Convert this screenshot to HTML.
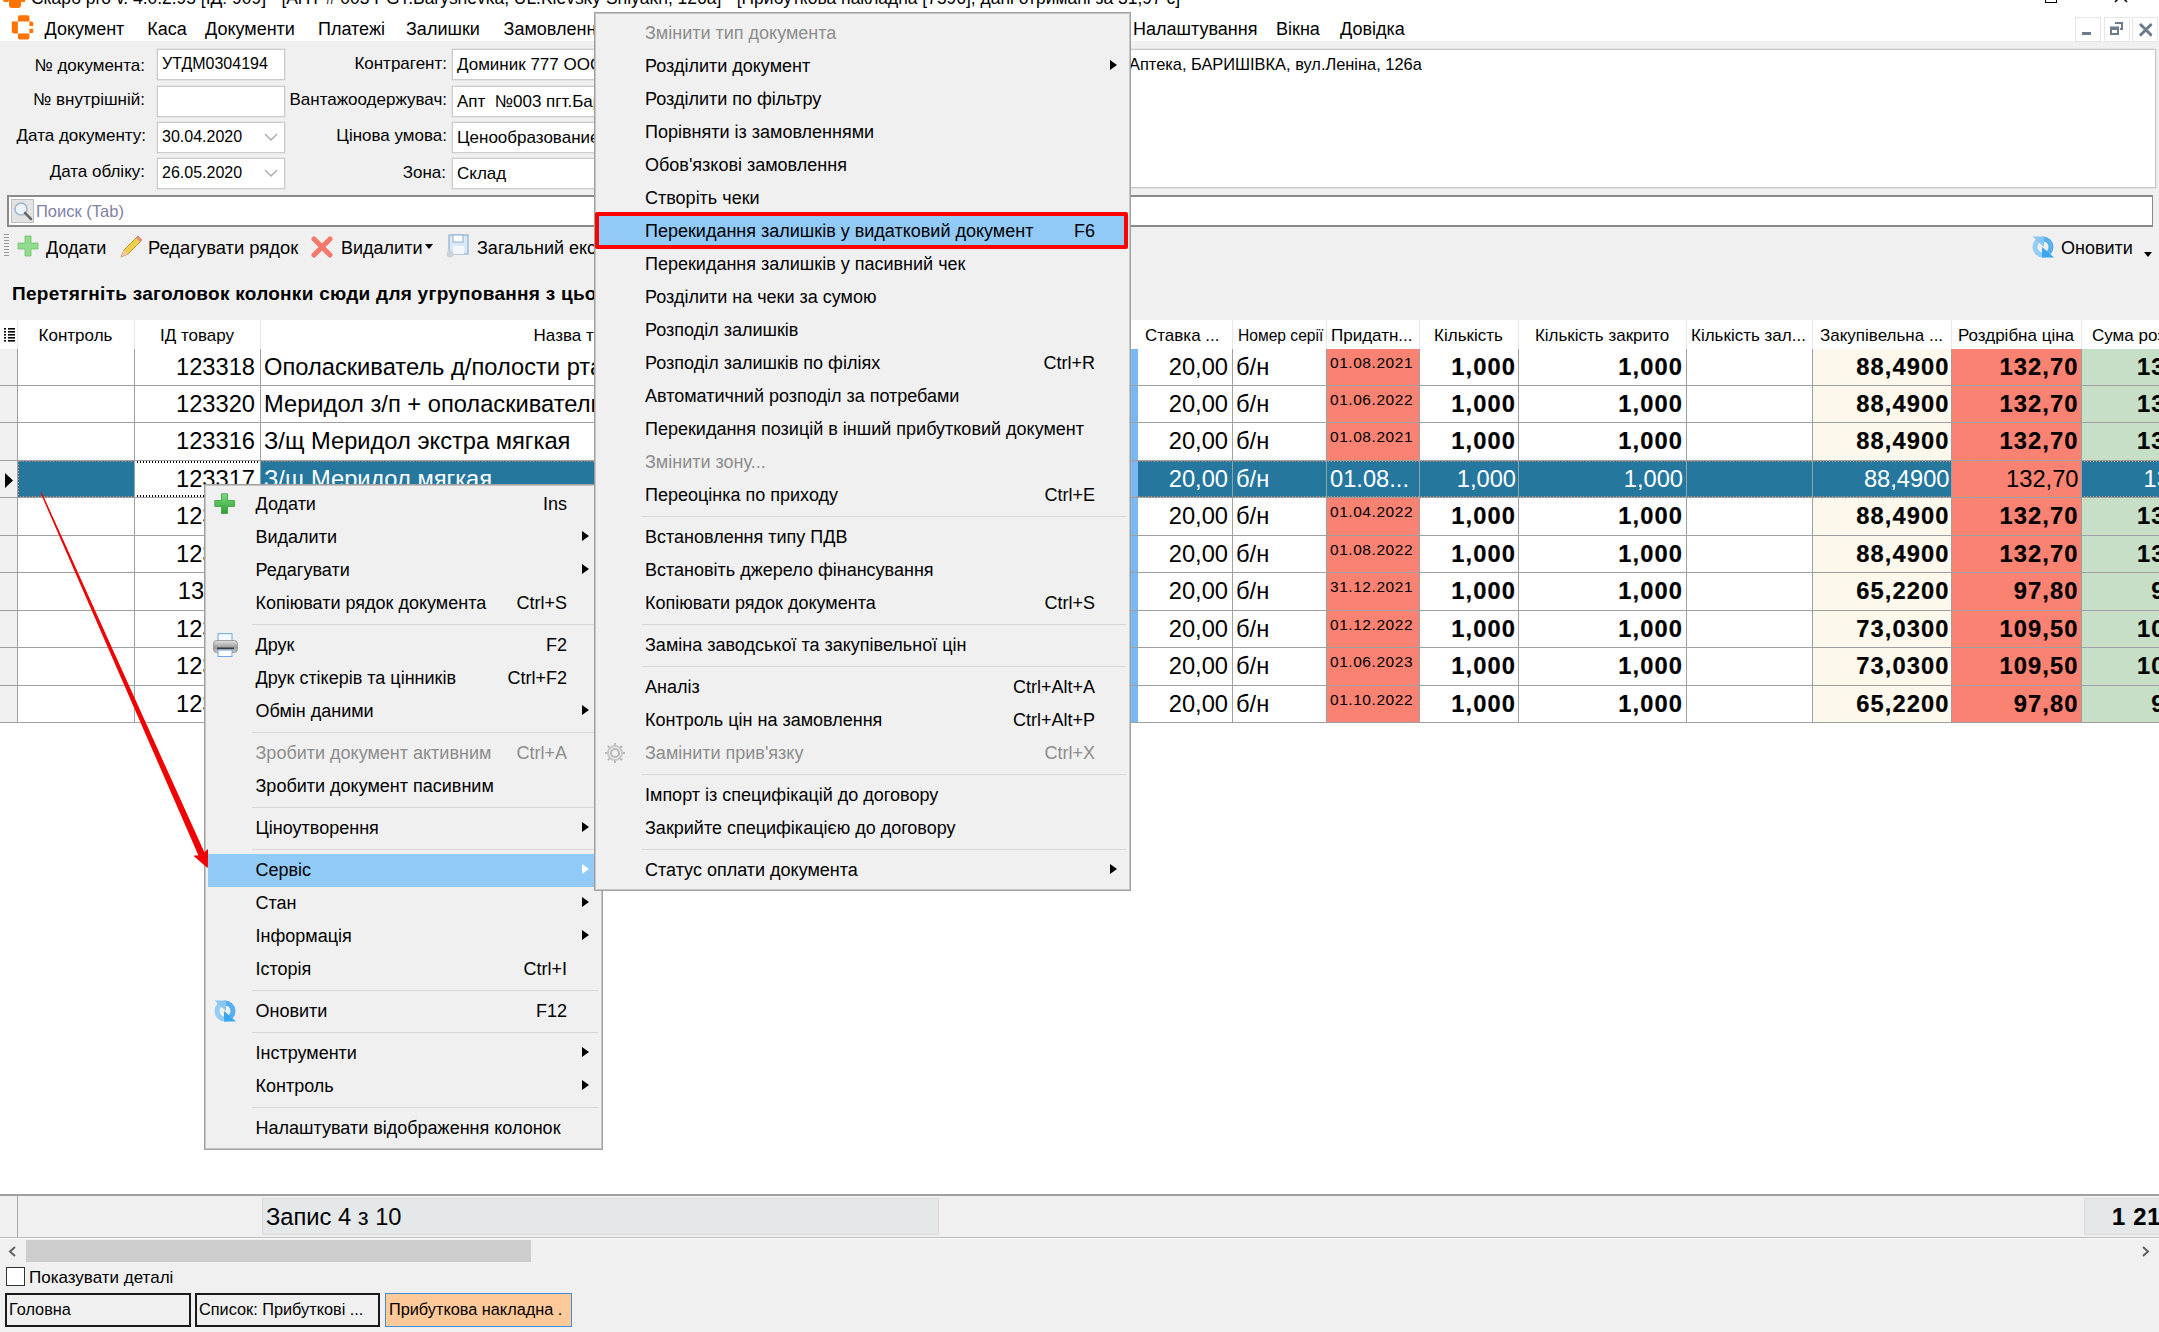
<!DOCTYPE html><html><head><meta charset='utf-8'><style>
*{box-sizing:border-box}
html,body{margin:0;padding:0}
body{width:2159px;height:1332px;overflow:hidden;position:relative;background:#f0f0f0;font-family:"Liberation Sans", sans-serif;color:#000}
.a{position:absolute;white-space:nowrap}
.t{position:absolute;white-space:nowrap;line-height:1}
.fld{position:absolute;background:#fff;border:1px solid #cbcbcb;box-shadow:0 0 0 0.6px #dedede}
.lbl{position:absolute;white-space:nowrap;font-size:17px;text-align:right;line-height:20px}
.hl{position:absolute;background:#a0a0a0}
.mi{position:absolute;white-space:nowrap;font-size:18px;line-height:33px;height:33px}
.sc{position:absolute;white-space:nowrap;font-size:18px;line-height:33px;height:33px;text-align:right}
.dis{color:#8d8d8d}
.arr{position:absolute;width:0;height:0;border-top:5.5px solid transparent;border-bottom:5.5px solid transparent;border-left:7px solid #000}
.sep{position:absolute;height:1px;background:#d7d7d7}
.g{position:absolute;white-space:nowrap;font-size:23.7px;line-height:37px;height:37px;overflow:hidden}
.gb{font-weight:700;letter-spacing:1.1px;-webkit-text-stroke:0.2px #000}
.hd{position:absolute;white-space:nowrap;font-size:17px;line-height:28px;height:28px;overflow:hidden;text-align:center}
</style></head><body>
<div class='a' style='left:0;top:0;width:2159px;height:41px;background:#fff'></div>
<div class='a' style='left:9px;top:0;width:12px;height:8px;background:#ff7300;border-radius:0 0 3px 3px'></div>
<div class='a' style='left:3px;top:0;width:6px;height:2px;background:#ff7300;border-radius:0 0 2px 2px'></div>
<div class='a' style='left:21px;top:0;width:4px;height:2px;background:#ff7300'></div>
<div class='t' style='left:31px;top:-11.7px;font-size:17.44px;line-height:20px'>Скарб pro v. 4.0.2.95 [ІД: 909] - [АПТ # 003 PGT.Baryshevka, UL.Kievsky Shlyakh, 126a] - [Прибуткова накладна [7596], дані отримані за 31,97 с]</div>
<div class='a' style='left:2045px;top:-9px;width:12px;height:12px;border:1.5px solid #000'></div>
<svg class='a' style='left:2110px;top:-10px' width='24' height='14'><path d='M5 0 L17 12 M17 0 L5 12' stroke='#000' stroke-width='1.5'/></svg>
<svg class='a' style='left:11px;top:15px' width='24' height='26'><path d='M6.9 6.6 V2 Q6.9 0.2 8.7 0.2 H16.6 Q18.4 0.2 18.4 2 V6.6 Z' fill='#ff7300'/><path d='M6.9 6.6 H0.8 V16.6 Q0.8 18.4 2.6 18.4 H6.9 Z' fill='#ff7300'/><path d='M6.9 18.4 H18.4 V22.6 Q18.4 24.5 16.6 24.5 H8.7 Q6.9 24.5 6.9 22.6 Z' fill='#ff7300'/><path d='M18.4 6.6 H21 Q22.2 6.6 22.2 8.2 V11 H18.4 Z' fill='#ff7300'/><path d='M18.4 13.7 H22.2 V16.5 Q22.2 18.1 21 18.1 H18.4 Z' fill='#ff7300'/></svg>
<div class='t' style='left:44.5px;top:19px;font-size:18px;line-height:20px'>Документ</div>
<div class='t' style='left:147.3px;top:19px;font-size:18px;line-height:20px'>Каса</div>
<div class='t' style='left:205px;top:19px;font-size:18px;line-height:20px'>Документи</div>
<div class='t' style='left:318px;top:19px;font-size:18px;line-height:20px'>Платежі</div>
<div class='t' style='left:406px;top:19px;font-size:18px;line-height:20px'>Залишки</div>
<div class='t' style='left:503.6px;top:19px;font-size:18px;line-height:20px'>Замовлення</div>
<div class='t' style='left:1133px;top:19px;font-size:18px;line-height:20px'>Налаштування</div>
<div class='t' style='left:1276px;top:19px;font-size:18px;line-height:20px'>Вікна</div>
<div class='t' style='left:1340px;top:19px;font-size:18px;line-height:20px'>Довідка</div>
<div class='a' style='left:2075px;top:17px;width:26px;height:25px;border:1px solid #e6e6e6;background:#fff'></div>
<div class='a' style='left:2104px;top:17px;width:26px;height:25px;border:1px solid #e6e6e6;background:#fff'></div>
<div class='a' style='left:2132px;top:17px;width:26px;height:25px;border:1px solid #e6e6e6;background:#fff'></div>
<div class='a' style='left:2082px;top:32px;width:9px;height:3px;background:#6e7b8b'></div>
<svg class='a' style='left:2108px;top:20px' width='18' height='18'><path d='M7 3 H14 V9 H12 M3 7.5 H10 V14 H3 Z' fill='none' stroke='#6e7b8b' stroke-width='2'/><path d='M3 9 H10' stroke='#6e7b8b' stroke-width='2'/></svg>
<svg class='a' style='left:2138px;top:22px' width='16' height='16'><path d='M2.8 2.8 L12.8 12.8 M12.8 2.8 L2.8 12.8' stroke='#6e7b8b' stroke-width='3' stroke-linecap='round'/></svg>
<div class='lbl' style='left:-55px;width:200px;top:55.5px'>№ документа:</div>
<div class='lbl' style='left:-55px;width:200px;top:90px'>№ внутрішній:</div>
<div class='lbl' style='left:-54px;width:200px;top:126px'>Дата документу:</div>
<div class='lbl' style='left:-55px;width:200px;top:162px'>Дата обліку:</div>
<div class='fld' style='left:157px;top:49px;width:128px;height:31px'></div>
<div class='t' style='left:162px;top:54px;font-size:16px;line-height:20px'>УТДМ0304194</div>
<div class='fld' style='left:157px;top:86px;width:128px;height:31px'></div>
<div class='fld' style='left:157px;top:122px;width:128px;height:31px'></div>
<div class='t' style='left:162px;top:127px;font-size:16px;line-height:20px'>30.04.2020</div>
<svg class='a' style='left:264px;top:133px' width='14' height='9'><path d='M1 1 L7 7 L13 1' fill='none' stroke='#a8a8a8' stroke-width='1.3'/></svg>
<div class='fld' style='left:157px;top:158px;width:128px;height:31px'></div>
<div class='t' style='left:162px;top:163px;font-size:16px;line-height:20px'>26.05.2020</div>
<svg class='a' style='left:264px;top:169px' width='14' height='9'><path d='M1 1 L7 7 L13 1' fill='none' stroke='#a8a8a8' stroke-width='1.3'/></svg>
<div class='lbl' style='left:247px;width:200px;top:54px'>Контрагент:</div>
<div class='lbl' style='left:247px;width:200px;top:90px'>Вантажоодержувач:</div>
<div class='lbl' style='left:247px;width:200px;top:126px'>Цінова умова:</div>
<div class='lbl' style='left:246px;width:200px;top:163px'>Зона:</div>
<div class='fld' style='left:452px;top:49px;width:200px;height:31px;overflow:hidden'><div class='t' style='left:4px;top:5px;font-size:17px;line-height:20px'>Доминик 777 ООО</div></div>
<div class='fld' style='left:452px;top:86px;width:200px;height:31px;overflow:hidden'><div class='t' style='left:4px;top:5px;font-size:17px;line-height:20px'>Апт&nbsp; №003 пгт.Барышевка</div></div>
<div class='fld' style='left:452px;top:122px;width:200px;height:31px;overflow:hidden'><div class='t' style='left:4px;top:5px;font-size:17px;line-height:20px'>Ценообразование</div></div>
<div class='fld' style='left:452px;top:158px;width:200px;height:31px;overflow:hidden'><div class='t' style='left:4px;top:5px;font-size:17px;line-height:20px'>Склад</div></div>
<div class='fld' style='left:600px;top:49px;width:1556px;height:139px;border-color:#c8c8c8'></div>
<div class='t' style='left:1129px;top:54px;font-size:16.4px;line-height:20px'>Аптека, БАРИШІВКА, вул.Леніна, 126а</div>
<div class='a' style='left:7px;top:195px;width:2146px;height:32px;background:#fff;border:2px solid #8a8a8a;border-right-width:1px;border-bottom-width:2px'></div>
<div class='a' style='left:11px;top:199px;width:23px;height:24px;background:#e3e3e3;border:1px solid #bdbdbd'></div>
<svg class='a' style='left:12px;top:200px' width='22' height='22'><circle cx='9' cy='9' r='6' fill='#eaf3fb' stroke='#9fb6cc' stroke-width='1.6'/><path d='M13 13 L19 19' stroke='#6b6b6b' stroke-width='2.6' stroke-linecap='round'/></svg>
<div class='t' style='left:36px;top:201px;font-size:16.5px;line-height:20px;color:#7f82a6'>Поиск (Tab)</div>
<div class='a' style='left:4px;top:234px;width:5px;height:24px;background:repeating-linear-gradient(#9a9a9a 0 1px,transparent 1px 3px)'></div>
<svg class='a' style='left:17px;top:235px' width='23' height='23'><path d='M8 1 H14 V8 H21 V14 H14 V21 H8 V14 H1 V8 H8 Z' fill='#8fdc8f' stroke='#6cc06c' stroke-width='0.8' stroke-linejoin='round'/></svg>
<div class='t' style='left:46px;top:238px;font-size:18px;line-height:20px'>Додати</div>
<svg class='a' style='left:117px;top:233px' width='28' height='28'><path d='M4 24 L7 17 L21 3 L25 7 L11 21 Z' fill='#f2cf4a' stroke='#b89a2a' stroke-width='1'/><path d='M21 3 L25 7 L23 9 L19 5 Z' fill='#e88'/><path d='M4 24 L7 17 L11 21 Z' fill='#f4c9a8'/></svg>
<div class='t' style='left:148px;top:238px;font-size:18.4px;line-height:20px'>Редагувати рядок</div>
<svg class='a' style='left:310px;top:235px' width='24' height='24'><path d='M4 4 L20 20 M20 4 L4 20' stroke='#f4796b' stroke-width='5' stroke-linecap='round'/></svg>
<div class='t' style='left:341px;top:238px;font-size:18px;line-height:20px'>Видалити</div>
<div class='a' style='left:425px;top:244px;width:0;height:0;border-left:4px solid transparent;border-right:4px solid transparent;border-top:5px solid #000'></div>
<svg class='a' style='left:446px;top:234px' width='25' height='25'><rect x='3' y='1' width='19' height='19' fill='#dbe9f6' stroke='#8fb0d0' stroke-width='1.2'/><rect x='7' y='1' width='10' height='7' fill='#fff' stroke='#8fb0d0'/><rect x='7' y='12' width='11' height='8' fill='#f4f8fc'/><circle cx='4' cy='20' r='3.5' fill='#c9d3dc'/></svg>
<div class='t' style='left:477px;top:238px;font-size:18px;line-height:20px'>Загальний експорт</div>
<svg class='a' style='left:2032px;top:236px' width='23' height='23'><path d='M11 3 A8 8 0 0 0 11 19' fill='none' stroke='#93cdf3' stroke-width='5'/><path d='M11 19 A8 8 0 0 0 11 3' fill='none' stroke='#56b0ee' stroke-width='5'/><path d='M0.5 0.5 H12 V11 Z' fill='#86c6f2'/><path d='M22 21.5 H10 V11 Z' fill='#3aa6ee'/></svg>
<div class='t' style='left:2061px;top:238px;font-size:18px;line-height:20px'>Оновити</div>
<div class='a' style='left:2144px;top:252px;width:0;height:0;border-left:4px solid transparent;border-right:4px solid transparent;border-top:5px solid #000'></div>
<div class='t' style='left:12px;top:284px;font-size:19px;line-height:20px;font-weight:700;letter-spacing:0.27px'>Перетягніть заголовок колонки сюди для угруповання з цього стовпця</div>
<div class='a' style='left:0;top:320px;width:2159px;height:874px;background:#fff'></div>
<div class='a' style='left:17px;top:320px;width:1px;height:29px;background:#e8e8e8'></div>
<div class='a' style='left:134px;top:320px;width:1px;height:29px;background:#e8e8e8'></div>
<div class='a' style='left:260px;top:320px;width:1px;height:29px;background:#e8e8e8'></div>
<div class='a' style='left:1232px;top:320px;width:1px;height:29px;background:#e8e8e8'></div>
<div class='a' style='left:1326px;top:320px;width:1px;height:29px;background:#e8e8e8'></div>
<div class='a' style='left:1419px;top:320px;width:1px;height:29px;background:#e8e8e8'></div>
<div class='a' style='left:1518px;top:320px;width:1px;height:29px;background:#e8e8e8'></div>
<div class='a' style='left:1686px;top:320px;width:1px;height:29px;background:#e8e8e8'></div>
<div class='a' style='left:1812px;top:320px;width:1px;height:29px;background:#e8e8e8'></div>
<div class='a' style='left:1951px;top:320px;width:1px;height:29px;background:#e8e8e8'></div>
<div class='a' style='left:2081px;top:320px;width:1px;height:29px;background:#e8e8e8'></div>
<svg class='a' style='left:3.5px;top:327.5px' width='12' height='16'><rect x='0' y='0' width='2' height='1.6' fill='#000'/><rect x='4' y='0' width='7' height='1.6' fill='#000'/><rect x='0' y='3' width='2' height='1.6' fill='#000'/><rect x='4' y='3' width='7' height='1.6' fill='#000'/><rect x='0' y='6' width='2' height='1.6' fill='#000'/><rect x='4' y='6' width='7' height='1.6' fill='#000'/><rect x='0' y='9' width='2' height='1.6' fill='#000'/><rect x='4' y='9' width='7' height='1.6' fill='#000'/><rect x='0' y='12' width='2' height='1.6' fill='#000'/><rect x='4' y='12' width='7' height='1.6' fill='#000'/></svg>
<div class='hd' style='left:17px;width:117px;top:322px'>Контроль</div>
<div class='hd' style='left:134px;width:126px;top:322px'>ІД товару</div>
<div class='hd' style='left:533.6px;width:266.4px;top:322px;text-align:left;'>Назва товару</div>
<div class='hd' style='left:1145px;width:87px;top:322px;text-align:left;'>Ставка ...</div>
<div class='hd' style='left:1238px;width:88px;top:322px;text-align:left;font-size:15.6px'>Номер серії</div>
<div class='hd' style='left:1331px;width:88px;top:322px;text-align:left;'>Придатн...</div>
<div class='hd' style='left:1419px;width:99px;top:322px'>Кількість</div>
<div class='hd' style='left:1518px;width:168px;top:322px'>Кількість закрито</div>
<div class='hd' style='left:1691px;width:121px;top:322px;text-align:left;'>Кількість зал...</div>
<div class='hd' style='left:1820px;width:131px;top:322px;text-align:left;'>Закупівельна ...</div>
<div class='hd' style='left:1951px;width:130px;top:322px'>Роздрібна ціна</div>
<div class='hd' style='left:2092px;width:208px;top:322px;text-align:left;'>Сума роздрібна</div>
<div class='a' style='left:0;top:349px;width:17px;height:37px;background:#f0f0f0'></div>
<div class='a' style='left:1326px;top:349px;width:93px;height:37px;background:#f98272'></div>
<div class='a' style='left:1812px;top:349px;width:139px;height:37px;background:#fdf8ec'></div>
<div class='a' style='left:1951px;top:349px;width:130px;height:37px;background:#f98272'></div>
<div class='a' style='left:2081px;top:349px;width:78px;height:37px;background:#c6dfc6'></div>
<div class='a' style='left:1131px;top:349px;width:7px;height:37px;background:#7ab8f5'></div>
<div class='g' style='left:134px;width:121px;top:349px;text-align:right'>123318</div>
<div class='g' style='left:264px;width:870px;top:349px;color:#000'>Ополаскиватель д/полости рта Меридол 400мл</div>
<div class='g' style='left:1138px;width:90px;top:349px;text-align:right;color:#000'>20,00</div>
<div class='g' style='left:1236px;width:90px;top:349px;color:#000'>б/н</div>
<div class='t' style='left:1330px;top:355px;font-size:15.5px;line-height:16px;letter-spacing:0.55px'>01.08.2021</div>
<div class='g gb' style='left:1419px;width:97px;top:349px;text-align:right;color:#000'>1,000</div>
<div class='g gb' style='left:1518px;width:165px;top:349px;text-align:right;color:#000'>1,000</div>
<div class='g gb' style='left:1812px;width:137.5px;top:349px;text-align:right;color:#000'>88,4900</div>
<div class='g gb' style='left:1951px;width:127.5px;top:349px;text-align:right;color:#000'>132,70</div>
<div class='g gb' style='left:2081px;width:135px;top:349px;text-align:right;color:#000;overflow:visible'>132,70</div>
<div class='hl' style='left:0;top:385px;width:2159px;height:1px'></div>
<div class='a' style='left:0;top:386px;width:17px;height:37px;background:#f0f0f0'></div>
<div class='a' style='left:1326px;top:386px;width:93px;height:37px;background:#f98272'></div>
<div class='a' style='left:1812px;top:386px;width:139px;height:37px;background:#fdf8ec'></div>
<div class='a' style='left:1951px;top:386px;width:130px;height:37px;background:#f98272'></div>
<div class='a' style='left:2081px;top:386px;width:78px;height:37px;background:#c6dfc6'></div>
<div class='a' style='left:1131px;top:386px;width:7px;height:37px;background:#7ab8f5'></div>
<div class='g' style='left:134px;width:121px;top:386px;text-align:right'>123320</div>
<div class='g' style='left:264px;width:870px;top:386px;color:#000'>Меридол з/п + ополаскиватель 400мл</div>
<div class='g' style='left:1138px;width:90px;top:386px;text-align:right;color:#000'>20,00</div>
<div class='g' style='left:1236px;width:90px;top:386px;color:#000'>б/н</div>
<div class='t' style='left:1330px;top:392px;font-size:15.5px;line-height:16px;letter-spacing:0.55px'>01.06.2022</div>
<div class='g gb' style='left:1419px;width:97px;top:386px;text-align:right;color:#000'>1,000</div>
<div class='g gb' style='left:1518px;width:165px;top:386px;text-align:right;color:#000'>1,000</div>
<div class='g gb' style='left:1812px;width:137.5px;top:386px;text-align:right;color:#000'>88,4900</div>
<div class='g gb' style='left:1951px;width:127.5px;top:386px;text-align:right;color:#000'>132,70</div>
<div class='g gb' style='left:2081px;width:135px;top:386px;text-align:right;color:#000;overflow:visible'>132,70</div>
<div class='hl' style='left:0;top:422px;width:2159px;height:1px'></div>
<div class='a' style='left:0;top:423px;width:17px;height:38px;background:#f0f0f0'></div>
<div class='a' style='left:1326px;top:423px;width:93px;height:38px;background:#f98272'></div>
<div class='a' style='left:1812px;top:423px;width:139px;height:38px;background:#fdf8ec'></div>
<div class='a' style='left:1951px;top:423px;width:130px;height:38px;background:#f98272'></div>
<div class='a' style='left:2081px;top:423px;width:78px;height:38px;background:#c6dfc6'></div>
<div class='a' style='left:1131px;top:423px;width:7px;height:38px;background:#7ab8f5'></div>
<div class='g' style='left:134px;width:121px;top:423px;text-align:right'>123316</div>
<div class='g' style='left:264px;width:870px;top:423px;color:#000'>З/щ Меридол экстра мягкая</div>
<div class='g' style='left:1138px;width:90px;top:423px;text-align:right;color:#000'>20,00</div>
<div class='g' style='left:1236px;width:90px;top:423px;color:#000'>б/н</div>
<div class='t' style='left:1330px;top:429px;font-size:15.5px;line-height:16px;letter-spacing:0.55px'>01.08.2021</div>
<div class='g gb' style='left:1419px;width:97px;top:423px;text-align:right;color:#000'>1,000</div>
<div class='g gb' style='left:1518px;width:165px;top:423px;text-align:right;color:#000'>1,000</div>
<div class='g gb' style='left:1812px;width:137.5px;top:423px;text-align:right;color:#000'>88,4900</div>
<div class='g gb' style='left:1951px;width:127.5px;top:423px;text-align:right;color:#000'>132,70</div>
<div class='g gb' style='left:2081px;width:135px;top:423px;text-align:right;color:#000;overflow:visible'>132,70</div>
<div class='hl' style='left:0;top:460px;width:2159px;height:1px'></div>
<div class='a' style='left:0;top:461px;width:17px;height:37px;background:#f0f0f0'></div>
<div class='a' style='left:17px;top:461px;width:2142px;height:37px;background:#26779e'></div>
<div class='a' style='left:134px;top:461px;width:126px;height:37px;background:#fff'></div>
<div class='a' style='left:1951px;top:461px;width:130px;height:37px;background:#f98272'></div>
<div class='a' style='left:1131px;top:461px;width:7px;height:37px;background:#7ab8f5'></div>
<div class='g' style='left:134px;width:121px;top:461px;text-align:right'>123317</div>
<div class='g' style='left:264px;width:870px;top:461px;color:#fff'>З/щ Меридол мягкая</div>
<div class='g' style='left:1138px;width:90px;top:461px;text-align:right;color:#fff'>20,00</div>
<div class='g' style='left:1236px;width:90px;top:461px;color:#fff'>б/н</div>
<div class='g' style='left:1330px;width:89px;top:461px;color:#fff'>01.08...</div>
<div class='g' style='left:1419px;width:97px;top:461px;text-align:right;color:#fff'>1,000</div>
<div class='g' style='left:1518px;width:165px;top:461px;text-align:right;color:#fff'>1,000</div>
<div class='g' style='left:1812px;width:137.5px;top:461px;text-align:right;color:#fff'>88,4900</div>
<div class='g' style='left:1951px;width:127.5px;top:461px;text-align:right;color:#000'>132,70</div>
<div class='g' style='left:2081px;width:135px;top:461px;text-align:right;color:#fff;overflow:visible'>132,70</div>
<div class='hl' style='left:0;top:497px;width:2159px;height:1px'></div>
<div class='a' style='left:17px;top:461px;width:2142px;height:1px;background:repeating-linear-gradient(90deg,#dc9068 0 1px,transparent 1px 3px)'></div>
<div class='a' style='left:17px;top:496px;width:2142px;height:1px;background:repeating-linear-gradient(90deg,#dc9068 0 1px,transparent 1px 3px)'></div>
<div class='a' style='left:134px;top:461px;width:126px;height:2px;background:repeating-linear-gradient(90deg,#000 0 1.5px,#fff 1.5px 3px)'></div>
<div class='a' style='left:134px;top:495px;width:126px;height:2px;background:repeating-linear-gradient(90deg,#000 0 1.5px,#fff 1.5px 3px)'></div>
<div class='a' style='left:17px;top:461px;width:1.5px;height:36px;background:repeating-linear-gradient(#dc9068 0 1px,transparent 1px 3px)'></div>
<svg class='a' style='left:4px;top:473px' width='10' height='16'><path d='M1 0 L9 7.5 L1 15 Z' fill='#000'/></svg>
<div class='a' style='left:0;top:498px;width:17px;height:38px;background:#f0f0f0'></div>
<div class='a' style='left:1326px;top:498px;width:93px;height:38px;background:#f98272'></div>
<div class='a' style='left:1812px;top:498px;width:139px;height:38px;background:#fdf8ec'></div>
<div class='a' style='left:1951px;top:498px;width:130px;height:38px;background:#f98272'></div>
<div class='a' style='left:2081px;top:498px;width:78px;height:38px;background:#c6dfc6'></div>
<div class='a' style='left:1131px;top:498px;width:7px;height:38px;background:#7ab8f5'></div>
<div class='g' style='left:134px;width:121px;top:498px;text-align:right'>123319</div>
<div class='g' style='left:264px;width:870px;top:498px;color:#000'>З/п Меридол 75мл</div>
<div class='g' style='left:1138px;width:90px;top:498px;text-align:right;color:#000'>20,00</div>
<div class='g' style='left:1236px;width:90px;top:498px;color:#000'>б/н</div>
<div class='t' style='left:1330px;top:504px;font-size:15.5px;line-height:16px;letter-spacing:0.55px'>01.04.2022</div>
<div class='g gb' style='left:1419px;width:97px;top:498px;text-align:right;color:#000'>1,000</div>
<div class='g gb' style='left:1518px;width:165px;top:498px;text-align:right;color:#000'>1,000</div>
<div class='g gb' style='left:1812px;width:137.5px;top:498px;text-align:right;color:#000'>88,4900</div>
<div class='g gb' style='left:1951px;width:127.5px;top:498px;text-align:right;color:#000'>132,70</div>
<div class='g gb' style='left:2081px;width:135px;top:498px;text-align:right;color:#000;overflow:visible'>132,70</div>
<div class='hl' style='left:0;top:535px;width:2159px;height:1px'></div>
<div class='a' style='left:0;top:536px;width:17px;height:37px;background:#f0f0f0'></div>
<div class='a' style='left:1326px;top:536px;width:93px;height:37px;background:#f98272'></div>
<div class='a' style='left:1812px;top:536px;width:139px;height:37px;background:#fdf8ec'></div>
<div class='a' style='left:1951px;top:536px;width:130px;height:37px;background:#f98272'></div>
<div class='a' style='left:2081px;top:536px;width:78px;height:37px;background:#c6dfc6'></div>
<div class='a' style='left:1131px;top:536px;width:7px;height:37px;background:#7ab8f5'></div>
<div class='g' style='left:134px;width:121px;top:536px;text-align:right'>123321</div>
<div class='g' style='left:264px;width:870px;top:536px;color:#000'>З/п Меридол бережное отбел.</div>
<div class='g' style='left:1138px;width:90px;top:536px;text-align:right;color:#000'>20,00</div>
<div class='g' style='left:1236px;width:90px;top:536px;color:#000'>б/н</div>
<div class='t' style='left:1330px;top:542px;font-size:15.5px;line-height:16px;letter-spacing:0.55px'>01.08.2022</div>
<div class='g gb' style='left:1419px;width:97px;top:536px;text-align:right;color:#000'>1,000</div>
<div class='g gb' style='left:1518px;width:165px;top:536px;text-align:right;color:#000'>1,000</div>
<div class='g gb' style='left:1812px;width:137.5px;top:536px;text-align:right;color:#000'>88,4900</div>
<div class='g gb' style='left:1951px;width:127.5px;top:536px;text-align:right;color:#000'>132,70</div>
<div class='g gb' style='left:2081px;width:135px;top:536px;text-align:right;color:#000;overflow:visible'>132,70</div>
<div class='hl' style='left:0;top:572px;width:2159px;height:1px'></div>
<div class='a' style='left:0;top:573px;width:17px;height:38px;background:#f0f0f0'></div>
<div class='a' style='left:1326px;top:573px;width:93px;height:38px;background:#f98272'></div>
<div class='a' style='left:1812px;top:573px;width:139px;height:38px;background:#fdf8ec'></div>
<div class='a' style='left:1951px;top:573px;width:130px;height:38px;background:#f98272'></div>
<div class='a' style='left:2081px;top:573px;width:78px;height:38px;background:#c6dfc6'></div>
<div class='a' style='left:1131px;top:573px;width:7px;height:38px;background:#7ab8f5'></div>
<div class='g' style='left:134px;width:121px;top:573px;text-align:right'>131122</div>
<div class='g' style='left:264px;width:870px;top:573px;color:#000'>З/щ Элмекс</div>
<div class='g' style='left:1138px;width:90px;top:573px;text-align:right;color:#000'>20,00</div>
<div class='g' style='left:1236px;width:90px;top:573px;color:#000'>б/н</div>
<div class='t' style='left:1330px;top:579px;font-size:15.5px;line-height:16px;letter-spacing:0.55px'>31.12.2021</div>
<div class='g gb' style='left:1419px;width:97px;top:573px;text-align:right;color:#000'>1,000</div>
<div class='g gb' style='left:1518px;width:165px;top:573px;text-align:right;color:#000'>1,000</div>
<div class='g gb' style='left:1812px;width:137.5px;top:573px;text-align:right;color:#000'>65,2200</div>
<div class='g gb' style='left:1951px;width:127.5px;top:573px;text-align:right;color:#000'>97,80</div>
<div class='g gb' style='left:2081px;width:135px;top:573px;text-align:right;color:#000;overflow:visible'>97,80</div>
<div class='hl' style='left:0;top:610px;width:2159px;height:1px'></div>
<div class='a' style='left:0;top:611px;width:17px;height:37px;background:#f0f0f0'></div>
<div class='a' style='left:1326px;top:611px;width:93px;height:37px;background:#f98272'></div>
<div class='a' style='left:1812px;top:611px;width:139px;height:37px;background:#fdf8ec'></div>
<div class='a' style='left:1951px;top:611px;width:130px;height:37px;background:#f98272'></div>
<div class='a' style='left:2081px;top:611px;width:78px;height:37px;background:#c6dfc6'></div>
<div class='a' style='left:1131px;top:611px;width:7px;height:37px;background:#7ab8f5'></div>
<div class='g' style='left:134px;width:121px;top:611px;text-align:right'>123325</div>
<div class='g' style='left:264px;width:870px;top:611px;color:#000'>З/п Элмекс сенситив</div>
<div class='g' style='left:1138px;width:90px;top:611px;text-align:right;color:#000'>20,00</div>
<div class='g' style='left:1236px;width:90px;top:611px;color:#000'>б/н</div>
<div class='t' style='left:1330px;top:617px;font-size:15.5px;line-height:16px;letter-spacing:0.55px'>01.12.2022</div>
<div class='g gb' style='left:1419px;width:97px;top:611px;text-align:right;color:#000'>1,000</div>
<div class='g gb' style='left:1518px;width:165px;top:611px;text-align:right;color:#000'>1,000</div>
<div class='g gb' style='left:1812px;width:137.5px;top:611px;text-align:right;color:#000'>73,0300</div>
<div class='g gb' style='left:1951px;width:127.5px;top:611px;text-align:right;color:#000'>109,50</div>
<div class='g gb' style='left:2081px;width:135px;top:611px;text-align:right;color:#000;overflow:visible'>109,50</div>
<div class='hl' style='left:0;top:647px;width:2159px;height:1px'></div>
<div class='a' style='left:0;top:648px;width:17px;height:38px;background:#f0f0f0'></div>
<div class='a' style='left:1326px;top:648px;width:93px;height:38px;background:#f98272'></div>
<div class='a' style='left:1812px;top:648px;width:139px;height:38px;background:#fdf8ec'></div>
<div class='a' style='left:1951px;top:648px;width:130px;height:38px;background:#f98272'></div>
<div class='a' style='left:2081px;top:648px;width:78px;height:38px;background:#c6dfc6'></div>
<div class='a' style='left:1131px;top:648px;width:7px;height:38px;background:#7ab8f5'></div>
<div class='g' style='left:134px;width:121px;top:648px;text-align:right'>123326</div>
<div class='g' style='left:264px;width:870px;top:648px;color:#000'>З/п Элмекс 75мл</div>
<div class='g' style='left:1138px;width:90px;top:648px;text-align:right;color:#000'>20,00</div>
<div class='g' style='left:1236px;width:90px;top:648px;color:#000'>б/н</div>
<div class='t' style='left:1330px;top:654px;font-size:15.5px;line-height:16px;letter-spacing:0.55px'>01.06.2023</div>
<div class='g gb' style='left:1419px;width:97px;top:648px;text-align:right;color:#000'>1,000</div>
<div class='g gb' style='left:1518px;width:165px;top:648px;text-align:right;color:#000'>1,000</div>
<div class='g gb' style='left:1812px;width:137.5px;top:648px;text-align:right;color:#000'>73,0300</div>
<div class='g gb' style='left:1951px;width:127.5px;top:648px;text-align:right;color:#000'>109,50</div>
<div class='g gb' style='left:2081px;width:135px;top:648px;text-align:right;color:#000;overflow:visible'>109,50</div>
<div class='hl' style='left:0;top:685px;width:2159px;height:1px'></div>
<div class='a' style='left:0;top:686px;width:17px;height:37px;background:#f0f0f0'></div>
<div class='a' style='left:1326px;top:686px;width:93px;height:37px;background:#f98272'></div>
<div class='a' style='left:1812px;top:686px;width:139px;height:37px;background:#fdf8ec'></div>
<div class='a' style='left:1951px;top:686px;width:130px;height:37px;background:#f98272'></div>
<div class='a' style='left:2081px;top:686px;width:78px;height:37px;background:#c6dfc6'></div>
<div class='a' style='left:1131px;top:686px;width:7px;height:37px;background:#7ab8f5'></div>
<div class='g' style='left:134px;width:121px;top:686px;text-align:right'>123324</div>
<div class='g' style='left:264px;width:870px;top:686px;color:#000'>З/щ Элмекс мягкая</div>
<div class='g' style='left:1138px;width:90px;top:686px;text-align:right;color:#000'>20,00</div>
<div class='g' style='left:1236px;width:90px;top:686px;color:#000'>б/н</div>
<div class='t' style='left:1330px;top:692px;font-size:15.5px;line-height:16px;letter-spacing:0.55px'>01.10.2022</div>
<div class='g gb' style='left:1419px;width:97px;top:686px;text-align:right;color:#000'>1,000</div>
<div class='g gb' style='left:1518px;width:165px;top:686px;text-align:right;color:#000'>1,000</div>
<div class='g gb' style='left:1812px;width:137.5px;top:686px;text-align:right;color:#000'>65,2200</div>
<div class='g gb' style='left:1951px;width:127.5px;top:686px;text-align:right;color:#000'>97,80</div>
<div class='g gb' style='left:2081px;width:135px;top:686px;text-align:right;color:#000;overflow:visible'>97,80</div>
<div class='hl' style='left:0;top:722px;width:2159px;height:1px'></div>
<div class='hl' style='left:17px;top:349px;width:1px;height:374px'></div>
<div class='hl' style='left:134px;top:349px;width:1px;height:374px'></div>
<div class='a' style='left:134px;top:462px;width:1px;height:34px;background:#8fa3ad'></div>
<div class='hl' style='left:260px;top:349px;width:1px;height:374px'></div>
<div class='a' style='left:260px;top:462px;width:1px;height:34px;background:#8fa3ad'></div>
<div class='hl' style='left:1232px;top:349px;width:1px;height:374px'></div>
<div class='a' style='left:1232px;top:462px;width:1px;height:34px;background:#8fa3ad'></div>
<div class='hl' style='left:1326px;top:349px;width:1px;height:374px'></div>
<div class='a' style='left:1326px;top:462px;width:1px;height:34px;background:#8fa3ad'></div>
<div class='hl' style='left:1419px;top:349px;width:1px;height:374px'></div>
<div class='a' style='left:1419px;top:462px;width:1px;height:34px;background:#8fa3ad'></div>
<div class='hl' style='left:1518px;top:349px;width:1px;height:374px'></div>
<div class='a' style='left:1518px;top:462px;width:1px;height:34px;background:#8fa3ad'></div>
<div class='hl' style='left:1686px;top:349px;width:1px;height:374px'></div>
<div class='a' style='left:1686px;top:462px;width:1px;height:34px;background:#8fa3ad'></div>
<div class='hl' style='left:1812px;top:349px;width:1px;height:374px'></div>
<div class='a' style='left:1812px;top:462px;width:1px;height:34px;background:#8fa3ad'></div>
<div class='hl' style='left:1951px;top:349px;width:1px;height:374px'></div>
<div class='a' style='left:1951px;top:462px;width:1px;height:34px;background:#8fa3ad'></div>
<div class='hl' style='left:2081px;top:349px;width:1px;height:374px'></div>
<div class='a' style='left:2081px;top:462px;width:1px;height:34px;background:#8fa3ad'></div>
<div class='a' style='left:0;top:1194px;width:2159px;height:2px;background:#a0a0a0'></div>
<div class='a' style='left:0;top:1196px;width:2159px;height:136px;background:#f0f0f0'></div>
<div class='a' style='left:17px;top:1196px;width:1px;height:41px;background:#a8a8a8'></div>
<div class='a' style='left:262px;top:1198px;width:677px;height:37px;background:#e5e8e9;border:1px solid #dadada'></div>
<div class='g' style='left:266px;top:1199px;height:37px'>Запис 4 з 10</div>
<div class='a' style='left:2084px;top:1198px;width:80px;height:37px;background:#e5e8e9;border:1px solid #dadada'></div>
<div class='g gb' style='left:2112px;top:1199px;height:37px;letter-spacing:0.8px'>1 215,20</div>
<div class='a' style='left:0;top:1237px;width:2159px;height:1px;background:#bdbdbd'></div>
<div class='a' style='left:0;top:1238px;width:2159px;height:1px;background:#fafafa'></div>
<div class='a' style='left:26px;top:1240px;width:505px;height:22px;background:#cdcdcd'></div>
<svg class='a' style='left:6px;top:1245px' width='12' height='13'><path d='M9 2 L4 6.5 L9 11' fill='none' stroke='#606060' stroke-width='2'/></svg>
<svg class='a' style='left:2140px;top:1245px' width='12' height='13'><path d='M3 2 L8 6.5 L3 11' fill='none' stroke='#606060' stroke-width='2'/></svg>
<div class='a' style='left:6px;top:1267px;width:19px;height:19px;background:#fff;border:1px solid #333'></div>
<div class='t' style='left:29px;top:1268px;font-size:17px;line-height:20px'>Показувати деталі</div>
<div class='a' style='left:5px;top:1293px;width:186px;height:34px;background:#f0f0f0;border:2px solid #1a1a1a;border-width:2px'></div>
<div class='t' style='left:9px;top:1299px;font-size:16.3px;line-height:20px'>Головна</div>
<div class='a' style='left:195px;top:1293px;width:185px;height:34px;background:#f0f0f0;border:2px solid #1a1a1a;border-width:2px'></div>
<div class='t' style='left:199px;top:1299px;font-size:16.3px;line-height:20px'>Список: Прибуткові  ...</div>
<div class='a' style='left:385px;top:1293px;width:187px;height:34px;background:#ffc999;border:2px solid #3c8fdc;border-width:1.5px'></div>
<div class='t' style='left:389px;top:1299px;font-size:16.3px;line-height:20px'>Прибуткова накладна .</div>
<div class='a' style='left:204px;top:484px;width:399px;height:665.5px;background:#f0f0f0;border:1px solid #a0a0a0;box-shadow:inset 1px 1px 0 #c6c6c6,inset -1px -1px 0 #c6c6c6'></div>
<div class='mi' style='left:255.5px;top:488px'>Додати</div>
<div class='sc' style='left:367px;width:200px;top:488px'>Ins</div>
<!--icon:Додати-->
<div class='mi' style='left:255.5px;top:521px'>Видалити</div>
<div class='arr' style='left:582px;top:530.5px;border-left-color:#000'></div>
<div class='mi' style='left:255.5px;top:554px'>Редагувати</div>
<div class='arr' style='left:582px;top:563.5px;border-left-color:#000'></div>
<div class='mi' style='left:255.5px;top:587px'>Копіювати рядок документа</div>
<div class='sc' style='left:367px;width:200px;top:587px'>Ctrl+S</div>
<div class='sep' style='left:252px;width:346px;top:624px'></div>
<div class='mi' style='left:255.5px;top:629px'>Друк</div>
<div class='sc' style='left:367px;width:200px;top:629px'>F2</div>
<!--icon:Друк-->
<div class='mi' style='left:255.5px;top:662px'>Друк стікерів та цінників</div>
<div class='sc' style='left:367px;width:200px;top:662px'>Ctrl+F2</div>
<div class='mi' style='left:255.5px;top:695px'>Обмін даними</div>
<div class='arr' style='left:582px;top:704.5px;border-left-color:#000'></div>
<div class='sep' style='left:252px;width:346px;top:732px'></div>
<div class='mi dis' style='left:255.5px;top:737px'>Зробити документ активним</div>
<div class='sc dis' style='left:367px;width:200px;top:737px'>Ctrl+A</div>
<div class='mi' style='left:255.5px;top:770px'>Зробити документ пасивним</div>
<div class='sep' style='left:252px;width:346px;top:807px'></div>
<div class='mi' style='left:255.5px;top:812px'>Ціноутворення</div>
<div class='arr' style='left:582px;top:821.5px;border-left-color:#000'></div>
<div class='sep' style='left:252px;width:346px;top:849px'></div>
<div class='a' style='left:208px;top:854px;width:391px;height:33px;background:#91c9f7'></div>
<div class='mi' style='left:255.5px;top:854px'>Сервіс</div>
<div class='arr' style='left:582px;top:863.5px;border-left-color:#fff'></div>
<div class='mi' style='left:255.5px;top:887px'>Стан</div>
<div class='arr' style='left:582px;top:896.5px;border-left-color:#000'></div>
<div class='mi' style='left:255.5px;top:920px'>Інформація</div>
<div class='arr' style='left:582px;top:929.5px;border-left-color:#000'></div>
<div class='mi' style='left:255.5px;top:953px'>Історія</div>
<div class='sc' style='left:367px;width:200px;top:953px'>Ctrl+I</div>
<div class='sep' style='left:252px;width:346px;top:990px'></div>
<div class='mi' style='left:255.5px;top:995px'>Оновити</div>
<div class='sc' style='left:367px;width:200px;top:995px'>F12</div>
<!--icon:Оновити-->
<div class='sep' style='left:252px;width:346px;top:1032px'></div>
<div class='mi' style='left:255.5px;top:1037px'>Інструменти</div>
<div class='arr' style='left:582px;top:1046.5px;border-left-color:#000'></div>
<div class='mi' style='left:255.5px;top:1070px'>Контроль</div>
<div class='arr' style='left:582px;top:1079.5px;border-left-color:#000'></div>
<div class='sep' style='left:252px;width:346px;top:1107px'></div>
<div class='mi' style='left:255.5px;top:1112px'>Налаштувати відображення колонок</div>
<svg class='a' style='left:214px;top:493px' width='22' height='22'><defs><linearGradient id='gp' x1='0' y1='0' x2='0' y2='1'><stop offset='0' stop-color='#7ddc7d'/><stop offset='1' stop-color='#2f9d2f'/></linearGradient></defs><path d='M7.5 0.8 H13.5 V7.5 H20.5 V13.5 H13.5 V20.5 H7.5 V13.5 H0.8 V7.5 H7.5 Z' fill='url(#gp)' stroke='#3a9e3a' stroke-width='0.8' stroke-linejoin='round'/></svg>
<svg class='a' style='left:213px;top:633px' width='25' height='25'><defs><linearGradient id='gpr' x1='0' y1='0' x2='0' y2='1'><stop offset='0' stop-color='#e2e2e2'/><stop offset='0.6' stop-color='#9a9a9a'/><stop offset='1' stop-color='#c8c8c8'/></linearGradient></defs><rect x='5' y='0.6' width='14' height='9' fill='#f4f9ff' stroke='#6ea8e6' stroke-width='1'/><rect x='0.6' y='7.5' width='23.8' height='12' rx='3' fill='url(#gpr)' stroke='#8c8c8c' stroke-width='0.8'/><rect x='4' y='14.5' width='17' height='1.6' fill='#3c3c3c'/><rect x='5' y='17' width='14' height='6.5' fill='#fff' stroke='#6ea8e6' stroke-width='1'/></svg>
<svg class='a' style='left:214px;top:1000px' width='23' height='23'><path d='M11 3 A8 8 0 0 0 11 19' fill='none' stroke='#93cdf3' stroke-width='5'/><path d='M11 19 A8 8 0 0 0 11 3' fill='none' stroke='#56b0ee' stroke-width='5'/><path d='M0.5 0.5 H12 V11 Z' fill='#86c6f2'/><path d='M22 21.5 H10 V11 Z' fill='#3aa6ee'/></svg>
<div class='a' style='left:594px;top:12px;width:537px;height:879px;background:#f0f0f0;border:1px solid #a0a0a0;box-shadow:inset 1px 1px 0 #c6c6c6,inset -1px -1px 0 #c6c6c6'></div>
<div class='mi dis' style='left:645px;top:17px'>Змінити тип документа</div>
<div class='mi' style='left:645px;top:50px'>Розділити документ</div>
<div class='arr' style='left:1110px;top:59.5px;border-left-color:#000'></div>
<div class='mi' style='left:645px;top:83px'>Розділити по фільтру</div>
<div class='mi' style='left:645px;top:116px'>Порівняти із замовленнями</div>
<div class='mi' style='left:645px;top:149px'>Обов'язкові замовлення</div>
<div class='mi' style='left:645px;top:182px'>Створіть чеки</div>
<div class='a' style='left:598px;top:215px;width:529px;height:33px;background:#91c9f7'></div>
<div class='mi' style='left:645px;top:215px'>Перекидання залишків у видатковий документ</div>
<div class='sc' style='left:895px;width:200px;top:215px'>F6</div>
<div class='mi' style='left:645px;top:248px'>Перекидання залишків у пасивний чек</div>
<div class='mi' style='left:645px;top:281px'>Розділити на чеки за сумою</div>
<div class='mi' style='left:645px;top:314px'>Розподіл залишків</div>
<div class='mi' style='left:645px;top:347px'>Розподіл залишків по філіях</div>
<div class='sc' style='left:895px;width:200px;top:347px'>Ctrl+R</div>
<div class='mi' style='left:645px;top:380px'>Автоматичний розподіл за потребами</div>
<div class='mi' style='left:645px;top:413px'>Перекидання позицій в інший прибутковий документ</div>
<div class='mi dis' style='left:645px;top:446px'>Змінити зону...</div>
<div class='mi' style='left:645px;top:479px'>Переоцінка по приходу</div>
<div class='sc' style='left:895px;width:200px;top:479px'>Ctrl+E</div>
<div class='sep' style='left:642px;width:484px;top:516px'></div>
<div class='mi' style='left:645px;top:521px'>Встановлення типу ПДВ</div>
<div class='mi' style='left:645px;top:554px'>Встановіть джерело фінансування</div>
<div class='mi' style='left:645px;top:587px'>Копіювати рядок документа</div>
<div class='sc' style='left:895px;width:200px;top:587px'>Ctrl+S</div>
<div class='sep' style='left:642px;width:484px;top:624px'></div>
<div class='mi' style='left:645px;top:629px'>Заміна заводської та закупівельної цін</div>
<div class='sep' style='left:642px;width:484px;top:666px'></div>
<div class='mi' style='left:645px;top:671px'>Аналіз</div>
<div class='sc' style='left:895px;width:200px;top:671px'>Ctrl+Alt+A</div>
<div class='mi' style='left:645px;top:704px'>Контроль цін на замовлення</div>
<div class='sc' style='left:895px;width:200px;top:704px'>Ctrl+Alt+P</div>
<div class='mi dis' style='left:645px;top:737px'>Замінити прив'язку</div>
<div class='sc dis' style='left:895px;width:200px;top:737px'>Ctrl+X</div>
<div class='sep' style='left:642px;width:484px;top:774px'></div>
<div class='mi' style='left:645px;top:779px'>Імпорт із специфікацій до договору</div>
<div class='mi' style='left:645px;top:812px'>Закрийте специфікацією до договору</div>
<div class='sep' style='left:642px;width:484px;top:849px'></div>
<div class='mi' style='left:645px;top:854px'>Статус оплати документа</div>
<div class='arr' style='left:1110px;top:863.5px;border-left-color:#000'></div>
<div class='a' style='left:595px;top:212px;width:533px;height:37px;border:4px solid #ff0000;border-radius:2px'></div>
<svg class='a' style='left:603px;top:741px' width='24' height='24'><g fill='none' stroke='#b8b8b8' stroke-width='2'><circle cx='12' cy='12' r='4'/><path d='M12 2 V6 M12 18 V22 M2 12 H6 M18 12 H22 M4.9 4.9 L7.8 7.8 M16.2 16.2 L19.1 19.1 M4.9 19.1 L7.8 16.2 M16.2 7.8 L19.1 4.9'/></g><circle cx='12' cy='12' r='7' fill='none' stroke='#c8c8c8' stroke-width='2'/></svg>
<svg class='a' style='left:0;top:0' width='2159' height='1332'><polygon points='41.3,493.4 199.2,855.8 194.6,856.0 207.3,867.1 207.5,849.9 204.3,853.5 41.5,493.2' fill='#f00000' stroke='#f00000' stroke-width='1.1' stroke-linejoin='round'/></svg>
</body></html>
